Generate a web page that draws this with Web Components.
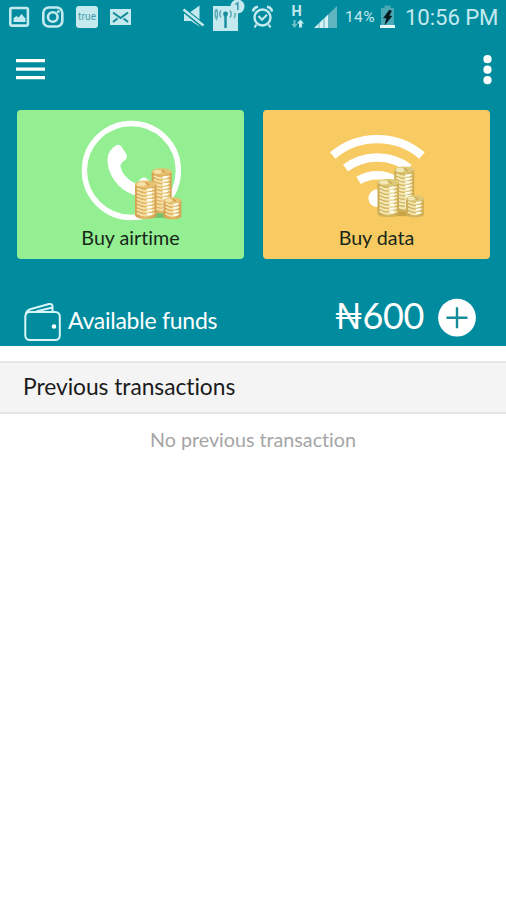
<!DOCTYPE html>
<html lang="en">
<head>
<meta charset="utf-8">
<title>Airtime</title>
<style>
    body {
        margin: 0;
        background: #fff;
        font-family: Lato, "Liberation Sans", sans-serif;
        font-variant-ligatures: none;
    }
</style>
</head>
<body>
<airtime-app></airtime-app>

<script>
// one stack of coins, x/y is the top left corner
function coinStack(x, y, w, h, c) {
    const ry = w * 0.17;
    const cx = x + w / 2;
    const r = w / 2;
    let out = `<path d="M${x} ${y + ry}V${y + h - ry}A${r} ${ry} 0 0 0 ${x + w} ${y + h - ry}V${y + ry}z" fill="url(#coin)"/>`;
    for (let cy = y + h - ry - 1.5; cy > y + ry + 2; cy -= 3.5) {
        out += `<path d="M${x + 2} ${cy - 1}q${r - 2} ${ry * 1.5} ${w - 4} 0" fill="none" stroke="${c.light}" stroke-width="2"/>
            <path d="M${cx + 1} ${cy + 0.3}l${w / 4} -.5" stroke="#fffdf0" stroke-width="2"/>`;
    }
    out += `<ellipse cx="${cx}" cy="${y + ry}" rx="${r}" ry="${ry}" fill="${c.top}"/>
        <ellipse cx="${cx - w * 0.2}" cy="${y + ry}" rx="${w / 5}" ry="${ry * 0.6}" fill="${c.light}"/>
        <path d="M${cx} ${y + ry - 1.5}l3.500 2.500" stroke="${c.edge}" stroke-width="1.600"/>`;
    return out;
}

function coins(dx, dy, c) {
    return `<defs>
        <linearGradient id="coin">
            <stop offset="0" stop-color="${c.edge}"/>
            <stop offset=".5" stop-color="${c.mid}"/>
            <stop offset="1" stop-color="${c.edge}"/>
        </linearGradient>
    </defs>
    <g transform="translate(${dx} ${dy})">
        <ellipse cx="142" cy="104" rx="19" ry="4" fill="${c.shadow}" opacity=".45"/>
        ${coinStack(134.7, 58.3, 20, 45, c)}
        ${coinStack(118, 70.5, 21.5, 38.5, c)}
        ${coinStack(146.5, 87.3, 17.8, 22, c)}
    </g>`;
}

const gold = {edge: "#d5a050", mid: "#e2b766", light: "#f5e0a6", top: "#e6c273", shadow: "#4f8a3c"};
const paleGold = {edge: "#ceab52", mid: "#d6b964", light: "#f2e8b6", top: "#dcc979", shadow: "#8a7528"};

class StatusBar extends HTMLElement {

    constructor() {
        super();
        this.shadowDOM = this.attachShadow({mode: "open"});
    }

    connectedCallback() {
        this.render();
    }

    render() {
        this.shadowDOM.innerHTML = `
        <style>
        :host {
            display: flex;
            justify-content: space-between;
            height: 34px;
            padding: 0 8px 0 9px;
            color: #c4e9ee;
            font-family: Roboto, sans-serif;
        }
        .left, .right {
            display: flex;
            align-items: center;
        }
        .left {
            gap: 12px;
        }
        svg {
            display: block;
            flex: none;
        }
        .tower { margin-left: 7px; overflow: visible; }
        .alarm { margin-left: 7px; }
        .net { margin-left: 17px; }
        .signal { margin-left: 10px; }
        .percent {
            margin-left: 8px;
            width: 35px;
            font-size: 15.5px;
            line-height: 34px;
            letter-spacing: 0.4px;
        }
        .clock {
            margin-left: 10px;
            width: 93px;
            font-size: 22.2px;
            line-height: 35px;
            letter-spacing: -0.1px;
            white-space: nowrap;
        }
        </style>
        <div class="left">
            <svg width="21" height="34" viewBox="0 0 21 34">
                <rect x="1.3" y="8" width="17.6" height="17.6" rx="1.5" fill="none" stroke="#c4e9ee" stroke-width="2.6"/>
                <path d="M4.5 22v-4l3-2 2 1.500 3-3.500 4 4.500v3.500z" fill="#c4e9ee"/>
            </svg>
            <svg width="22" height="34" viewBox="0 0 22 34">
                <rect x="1.300" y="7.500" width="19" height="19" rx="5.500" fill="none" stroke="#c4e9ee" stroke-width="2.600"/>
                <circle cx="10.800" cy="17" r="4.800" fill="none" stroke="#c4e9ee" stroke-width="2.600"/>
                <circle cx="16.300" cy="11.500" r="1.500" fill="#c4e9ee"/>
            </svg>
            <svg width="22" height="34" viewBox="0 0 22 34">
                <rect y="6" width="22" height="22" rx="3" fill="#c4e9ee"/>
                <text x="11" y="20" text-anchor="middle" font-size="10" textLength="18" fill="#3f9dab">true</text>
            </svg>
            <svg width="21" height="34" viewBox="0 0 21 34">
                <rect y="9" width="21" height="16" fill="#c4e9ee"/>
                <path d="M3 12.500l7.500 5.500 7.500-5.500M3 22l4.500-3.500M18 22l-4.500-3.500" fill="none" stroke="#128999" stroke-width="2"/>
            </svg>
        </div>
        <div class="right">
            <svg width="23" height="34" viewBox="0 0 23 34">
                <path d="M2 12h6.500l9-6.500v21l-8.500-5.500h-7z" fill="#c4e9ee"/>
                <path d="M0 8.500l21 17" stroke="#068b9c" stroke-width="5"/>
                <path d="M1.500 9.500l20 16" stroke="#c4e9ee" stroke-width="2.400"/>
            </svg>
            <svg class="tower" width="32" height="34" viewBox="0 0 32 34">
                <rect x="1" y="6" width="25" height="25" fill="#c4e9ee"/>
                <path d="M13.500 15v13" stroke="#168c9c" stroke-width="2.400"/>
                <circle cx="13.500" cy="14" r="2.400" fill="#168c9c"/>
                <path d="M9 10.500q-2.500 3.500 0 7M4.500 9q-3 5 0 10q2-5 0-10M18 10.500q2.500 3.500 0 7M22 10q2.500 4 0 8" fill="none" stroke="#5badb9" stroke-width="1.500"/>
                <circle cx="25.500" cy="6.500" r="7" fill="#c4e9ee"/>
                <path d="M23.500 4.500l2.300-1.500v7" fill="none" stroke="#3b9dab" stroke-width="1.600"/>
            </svg>
            <svg class="alarm" width="22" height="34" viewBox="0 0 22 34">
                <circle cx="11.500" cy="17.500" r="8" fill="none" stroke="#c4e9ee" stroke-width="2.400"/>
                <path d="M7.500 16l3.500 3.700 5-5M5.500 24.500l-2 3M17.500 24.500l2 3" fill="none" stroke="#c4e9ee" stroke-width="2.200"/>
                <path d="M2 11.500q.5-4 5-4.800M21 11.500q-.5-4-5-4.800" fill="none" stroke="#c4e9ee" stroke-width="2.600"/>
            </svg>
            <svg class="net" width="14" height="34" viewBox="0 0 14 34">
                <text x="1.500" y="16" font-size="14.500" font-weight="700" fill="#c4e9ee">H</text>
                <path d="M3.500 20v4H1.500l3 4 3-4H5.500v-4z" fill="#6fbec8"/>
                <path d="M9 27.500v-4H6.800l3.700-4 3.500 4h-2v4z" fill="#c4e9ee"/>
            </svg>
            <svg class="signal" width="23" height="34" viewBox="0 0 23 34">
                <path d="M0 28L23 6v22z" fill="#5fb4c0"/>
                <path d="M0 28l14-13.500V28z" fill="#9bd3db"/>
                <path d="M1 27.500l3-3V28H1zM6 22.500l3-3V28H6zM11 18l3-3V28h-3z" fill="#d7f1f4"/>
            </svg>
            <span class="percent">14%</span>
            <svg width="15" height="34" viewBox="0 0 15 34">
                <path d="M4.500 5.500h6V8H14v20H1V8h3.500z" fill="#4aa9b6"/>
                <rect y="25" width="15" height="3" fill="#e4f8fa"/>
                <path d="M9.500 10L3.500 18h3L5 24.500l7-8.500H9l2.500-5z" fill="#04171a" stroke="#04171a" stroke-width=".5"/>
            </svg>
            <span class="clock">10:56 PM</span>
        </div>`;
    }
}

class AppToolbar extends HTMLElement {

    constructor() {
        super();
        this.shadowDOM = this.attachShadow({mode: "open"});
    }

    connectedCallback() {
        this.shadowDOM.innerHTML = `
        <style>
        :host {
            display: flex;
            justify-content: space-between;
            align-items: center;
            height: 70px;
            padding: 0 14px 4px 16px;
            box-sizing: border-box;
            margin-top: 3px;
        }
        svg {
            display: block;
        }
        </style>
        <svg width="29" height="22" viewBox="0 0 29 22">
            <path d="M1 1.700h27M1 10.200h27M1 18.700h27" stroke="#fff" stroke-width="3.200" stroke-linecap="square"/>
        </svg>
        <svg width="9" height="30" viewBox="0 0 9 30">
            <g fill="#fff"><circle cx="4.500" cy="4.200" r="4.100"/><circle cx="4.500" cy="14.700" r="4.100"/><circle cx="4.500" cy="25.200" r="4.100"/></g>
        </svg>`;
    }
}

class BuyCard extends HTMLElement {

    constructor() {
        super();
        this.shadowDOM = this.attachShadow({mode: "open"});
    }

    connectedCallback() {
        this.render();
    }

    get picture() {
        if (this.getAttribute("icon") === "phone") {
            return `<circle cx="114.400" cy="60.500" r="47" fill="none" stroke="#fff" stroke-width="5.400"/>
                <path d="M98.500 35.800Q102 33.500 104.500 36.500L109.500 44.500Q111 48 107.500 50.500Q103 53.500 103.500 57Q106 67 118 73.500Q121 74 123 69.500Q127 66 130 69L138 75Q141 79 136 83Q130 88 119 85.500C104 82 90 66 90.500 49Q91 40.500 98.500 35.800z" fill="#fff"/>
                ${coins(0, 0, gold)}`;
        }
        return `<g fill="none" stroke="#fff" stroke-width="8.400">
                <path d="M69.700 45.500A69 69 0 0 1 159 45.500"/>
                <path d="M82.500 58A53 53 0 0 1 146 58"/>
                <path d="M95.500 70.300A36 36 0 0 1 132.500 70.300"/>
            </g>
            <circle cx="114.300" cy="88.200" r="8.900" fill="#fff"/>
            ${coins(-3.500, -1.800, paleGold)}`;
    }

    render() {
        this.shadowDOM.innerHTML = `
        <style>
        :host {
            display: flex;
            flex-direction: column;
            align-items: center;
            flex: 1;
            height: 149px;
            border-radius: 4px;
            background: var(--card-color);
            color: #17271a;
            font-size: 19.7px;
        }
        svg {
            display: block;
        }
        .label {
            line-height: 24px;
            margin-top: 4px;
        }
        </style>
        <svg width="227" height="112" viewBox="0 0 227 112">${this.picture}</svg>
        <div class="label"><slot></slot></div>`;
    }
}

class FundsRow extends HTMLElement {

    constructor() {
        super();
        this.shadowDOM = this.attachShadow({mode: "open"});
    }

    connectedCallback() {
        this.shadowDOM.innerHTML = `
        <style>
        :host {
            display: flex;
            align-items: center;
            height: 56px;
            margin-top: 31px;
            padding: 0 30px 0 24px;
            color: #fff;
        }
        svg {
            display: block;
        }
        .title {
            margin-left: 7px;
            padding-top: 3px;
            font-size: 23px;
            letter-spacing: -0.25px;
        }
        .amount {
            margin-left: auto;
            margin-right: 14px;
            padding-bottom: 6px;
            font-size: 36px;
            letter-spacing: -0.4px;
        }
        </style>
        <svg width="37" height="56" viewBox="0 0 37 56" fill="none" stroke="#d9f6f8" stroke-width="2">
            <rect x="1.300" y="22" width="34.500" height="28" rx="4.500"/>
            <path d="M2 24.500Q2 20.500 7 19L25 14Q28.500 13.500 28.500 16.500v2M28.500 17.500L12 21.500M28.500 18v3.500"/>
            <circle cx="30" cy="36.500" r="2.300" fill="#fff" stroke="none"/>
        </svg>
        <div class="title"><slot></slot></div>
        <div class="amount"><slot name="amount"></slot></div>
        <svg width="38" height="56" viewBox="0 0 38 56">
            <circle cx="19" cy="27.700" r="18.900" fill="#fff"/>
            <path d="M8.500 27.700h21M19 17.200v21" stroke="#168b9b" stroke-width="2.400"/>
        </svg>`;
    }
}

class TransactionList extends HTMLElement {

    constructor() {
        super();
        this.shadowDOM = this.attachShadow({mode: "open"});
    }

    connectedCallback() {
        this.shadowDOM.innerHTML = `
        <style>
        :host {
            display: block;
            margin-top: 15px;
        }
        .heading {
            height: 53px;
            box-sizing: border-box;
            padding-left: 23px;
            border-top: 2px solid #e6e6e6;
            border-bottom: 2px solid #e6e6e6;
            background: #f4f4f4;
            color: #1b1b1b;
            font-size: 22.8px;
            line-height: 46px;
            letter-spacing: -0.05px;
        }
        .empty {
            margin-top: 14px;
            text-align: center;
            color: #a5a5a5;
            font-size: 19.7px;
            line-height: 24px;
        }
        </style>
        <div class="heading"><slot name="heading"></slot></div>
        <div class="empty"><slot></slot></div>`;
    }
}

class AirtimeApp extends HTMLElement {

    constructor() {
        super();
        this.shadowDOM = this.attachShadow({mode: "open"});
    }

    connectedCallback() {
        this.shadowDOM.innerHTML = `
        <style>
        :host {
            display: block;
            min-height: 900px;
            background: #fff;
        }
        .top {
            display: flow-root;
            height: 346px;
            background: #008c9e;
        }
        .cards {
            display: flex;
            gap: 19px;
            margin-top: 3px;
            padding: 0 16px 0 17px;
        }
        .green { --card-color: #93ef91; }
        .orange { --card-color: #f8ca62; }
        </style>
        <div class="top">
            <status-bar></status-bar>
            <app-toolbar></app-toolbar>
            <div class="cards">
                <buy-card class="green" icon="phone">Buy airtime</buy-card>
                <buy-card class="orange" icon="wifi">Buy data</buy-card>
            </div>
            <funds-row>Available funds<span slot="amount">₦600</span></funds-row>
        </div>
        <transaction-list>
            <span slot="heading">Previous transactions</span>
            No previous transaction
        </transaction-list>`;
    }
}

customElements.define("status-bar", StatusBar);
customElements.define("app-toolbar", AppToolbar);
customElements.define("buy-card", BuyCard);
customElements.define("funds-row", FundsRow);
customElements.define("transaction-list", TransactionList);
customElements.define("airtime-app", AirtimeApp);
</script>
</body>
</html>
